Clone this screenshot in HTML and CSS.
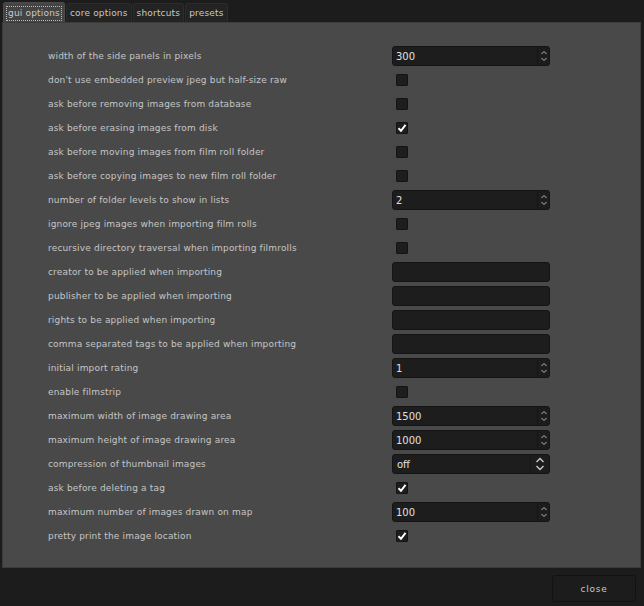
FILE: index.html
```html
<!DOCTYPE html>
<html>
<head>
<meta charset="utf-8">
<link rel="stylesheet" href="styles.css">
</head>
<body>
<div class="dialog">
  <div class="tabs">
    <div class="tab active"><span class="focus">gui options</span></div>
    <div class="tab">core options</div>
    <div class="tab">shortcuts</div>
    <div class="tab">presets</div>
  </div>
  <div class="panel">
    <div class="row"><span class="label">width of the side panels in pixels</span><div class="spin"><span class="val">300</span><span class="arrows"><svg viewBox="0 0 8 14" width="8" height="14"><path d="M1.5 5 L4 2.5 L6.5 5 M1.5 9 L4 11.5 L6.5 9" fill="none" stroke="#bbb" stroke-width="1"/></svg></span></div></div>
    <div class="row"><span class="label">don't use embedded preview jpeg but half-size raw</span><span class="check"></span></div>
    <div class="row"><span class="label">ask before removing images from database</span><span class="check"></span></div>
    <div class="row"><span class="label">ask before erasing images from disk</span><span class="check on"><svg viewBox="0 0 12 12" width="12" height="12"><path d="M2.5 6.2 L5 8.8 L9.5 2.8" fill="none" stroke="#fff" stroke-width="2"/></svg></span></div>
    <div class="row"><span class="label">ask before moving images from film roll folder</span><span class="check"></span></div>
    <div class="row"><span class="label">ask before copying images to new film roll folder</span><span class="check"></span></div>
    <div class="row"><span class="label">number of folder levels to show in lists</span><div class="spin"><span class="val">2</span><span class="arrows"><svg viewBox="0 0 8 14" width="8" height="14"><path d="M1.5 5 L4 2.5 L6.5 5 M1.5 9 L4 11.5 L6.5 9" fill="none" stroke="#bbb" stroke-width="1"/></svg></span></div></div>
    <div class="row"><span class="label">ignore jpeg images when importing film rolls</span><span class="check"></span></div>
    <div class="row"><span class="label">recursive directory traversal when importing filmrolls</span><span class="check"></span></div>
    <div class="row"><span class="label">creator to be applied when importing</span><div class="entry"></div></div>
    <div class="row"><span class="label">publisher to be applied when importing</span><div class="entry"></div></div>
    <div class="row"><span class="label">rights to be applied when importing</span><div class="entry"></div></div>
    <div class="row"><span class="label">comma separated tags to be applied when importing</span><div class="entry"></div></div>
    <div class="row"><span class="label">initial import rating</span><div class="spin"><span class="val">1</span><span class="arrows"><svg viewBox="0 0 8 14" width="8" height="14"><path d="M1.5 5 L4 2.5 L6.5 5 M1.5 9 L4 11.5 L6.5 9" fill="none" stroke="#bbb" stroke-width="1"/></svg></span></div></div>
    <div class="row"><span class="label">enable filmstrip</span><span class="check"></span></div>
    <div class="row"><span class="label">maximum width of image drawing area</span><div class="spin"><span class="val">1500</span><span class="arrows"><svg viewBox="0 0 8 14" width="8" height="14"><path d="M1.5 5 L4 2.5 L6.5 5 M1.5 9 L4 11.5 L6.5 9" fill="none" stroke="#bbb" stroke-width="1"/></svg></span></div></div>
    <div class="row"><span class="label">maximum height of image drawing area</span><div class="spin"><span class="val">1000</span><span class="arrows"><svg viewBox="0 0 8 14" width="8" height="14"><path d="M1.5 5 L4 2.5 L6.5 5 M1.5 9 L4 11.5 L6.5 9" fill="none" stroke="#bbb" stroke-width="1"/></svg></span></div></div>
    <div class="row"><span class="label">compression of thumbnail images</span><div class="combo"><span class="val">off</span><span class="carrows"><svg viewBox="0 0 10 16" width="10" height="16"><path d="M1.5 6 L5 2.5 L8.5 6 M1.5 10 L5 13.5 L8.5 10" fill="none" stroke="#ccc" stroke-width="1.3"/></svg></span></div></div>
    <div class="row"><span class="label">ask before deleting a tag</span><span class="check on"><svg viewBox="0 0 12 12" width="12" height="12"><path d="M2.5 6.2 L5 8.8 L9.5 2.8" fill="none" stroke="#fff" stroke-width="2"/></svg></span></div>
    <div class="row"><span class="label">maximum number of images drawn on map</span><div class="spin"><span class="val">100</span><span class="arrows"><svg viewBox="0 0 8 14" width="8" height="14"><path d="M1.5 5 L4 2.5 L6.5 5 M1.5 9 L4 11.5 L6.5 9" fill="none" stroke="#bbb" stroke-width="1"/></svg></span></div></div>
    <div class="row"><span class="label">pretty print the image location</span><span class="check on"><svg viewBox="0 0 12 12" width="12" height="12"><path d="M2.5 6.2 L5 8.8 L9.5 2.8" fill="none" stroke="#fff" stroke-width="2"/></svg></span></div>
  </div>
  <div class="footer">
    <button class="close">close</button>
  </div>
</div>
</body>
</html>
```
FILE: styles.css
```css
html, body {
  margin: 0;
  padding: 0;
  background: #1c1c1c;
  width: 644px;
  height: 606px;
  overflow: hidden;
}
.dialog {
  font-family: "DejaVu Sans", sans-serif;
  font-size: 9px;
  color: #c4c4c4;
  padding: 2px 3px 0 2px;
}
.tabs {
  display: flex;
  height: 20px;
  padding-left: 1px;
  gap: 1px;
}
.tab {
  background: #232323;
  border: 1px solid #2c2c2c;
  border-bottom: none;
  border-radius: 3px 3px 0 0;
  padding: 0 3px;
  margin-top: 1px;
  line-height: 19px;
  letter-spacing: 0.18px;
  color: #c8c8c8;
}
.tab.active {
  background: #444444;
  margin-top: 0;
  line-height: 20px;
  padding: 0 3px;
  border-color: #4c4c4c;
}
.focus {
  outline: 1px dotted #bbb;
  outline-offset: 0;
  padding: 1px 1px 2px 1px;
}
.panel {
  background: #494949;
  border: 1px solid #3c3c3c;
  height: 546px;
  box-sizing: border-box;
  padding: 21px 0 0 45px;
}
.row {
  display: grid;
  grid-template-columns: 344px 158px;
  align-items: center;
  height: 24px;
}
.label {
  letter-spacing: 0.17px;
  white-space: nowrap;
  color: #c6c6c6;
}
.spin, .entry, .combo {
  height: 20px;
  box-sizing: border-box;
  background: #1d1d1d;
  border: 1px solid #141414;
  border-radius: 3px;
  display: flex;
  align-items: center;
}
.val {
  flex: 1;
  padding-left: 3px;
  font-size: 10px;
  color: #e0e0e0;
}
.arrows {
  width: 11px;
  height: 100%;
  border-left: 1px solid #141414;
  display: flex;
  align-items: center;
  justify-content: center;
}
.carrows {
  width: 18px;
  height: 100%;
  border-left: 1px solid #171717;
  display: flex;
  align-items: center;
  justify-content: center;
}
.combo .val { padding-left: 4px; }
.check {
  width: 12px;
  height: 12px;
  box-sizing: border-box;
  background: #1e1e1e;
  border: 1px solid #141414;
  border-radius: 1px;
  margin-left: 4px;
  display: flex;
}
.check svg { margin: -1px; }
.footer {
  display: flex;
  justify-content: flex-end;
  padding: 7px 5px 0 0;
}
.close {
  width: 84px;
  height: 27px;
  background: #1c1c1c;
  border: 1px solid #121212;
  border-radius: 3px;
  color: #c8c8c8;
  font-family: "DejaVu Sans", sans-serif;
  font-size: 9px;
  letter-spacing: 0.8px;
}
```
